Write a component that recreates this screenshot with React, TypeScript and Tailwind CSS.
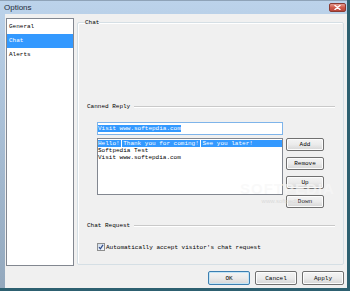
import React from 'react';

const mono = "font-['Liberation_Mono','DejaVu_Sans_Mono',monospace] text-[6px] text-black";

const WinButton: React.FC<{ label: string; primary?: boolean; className?: string }> = ({ label, primary, className }) => (
  <button
    className={`flex items-center justify-center rounded-[2px] border bg-gradient-to-b from-[#f4f4f4] via-[#ebebeb] to-[#d6d6d6] leading-[7px] ${mono} ${
      primary ? 'border-[#3c7fb1] shadow-[inset_0_0_0_1px_#c4e5f6]' : 'border-[#707070] shadow-[inset_0_0_0_1px_#fcfcfc]'
    } ${className ?? ''}`}
  >
    {label}
  </button>
);

const SectionHeader: React.FC<{ title: string }> = ({ title }) => (
  <div className="flex h-[7px] items-center">
    <span className={`${mono} leading-[7px]`}>{title}</span>
    <div className="ml-[4px] h-[2px] flex-1 border-t border-b border-t-[#c9c9c9] border-b-white" />
  </div>
);

const Sep = () => (
  <span className="flex h-full w-[3.6px] justify-center">
    <span className="h-full w-px bg-white" />
  </span>
);

const App: React.FC = () => {
  const sections = ['General', 'Chat', 'Alerts'];

  return (
    <div className="relative flex h-[291px] w-[350px] flex-col overflow-hidden border-r-[3px] border-b-[3px] border-[#2d6070] bg-gradient-to-b from-[#bcd3eb] to-[#93a8bd]">
      {/* title bar */}
      <div className="flex h-[14px] items-center justify-between border-t border-[#8fa3b8] pl-[4px] pr-[1px]">
        <span className="font-['Liberation_Sans',Arial,sans-serif] text-[8px] leading-[9px] text-[#1c2a3a]">Options</span>
        <div className="flex h-[9px] w-[17px] items-center justify-center rounded-[2px] border border-[#8a3a32] bg-gradient-to-b from-[#e39a8f] via-[#cf5a4b] to-[#b8463a]">
          <svg width="7" height="5" viewBox="0 0 7 5">
            <path d="M1 0.5 L6 4.5 M6 0.5 L1 4.5" stroke="#fff" strokeWidth="1.4" strokeLinecap="round" />
          </svg>
        </div>
      </div>

      {/* client area */}
      <div className="ml-[5px] flex flex-1 flex-col bg-[#f0f0f0] pt-[4px]">
        <div className="flex pl-[1px]">
          {/* section list */}
          <div className="h-[248px] w-[68px] border border-[#828790] bg-white pt-[1px]">
            {sections.map(s => (
              <div
                key={s}
                className={`h-[14px] pl-[2px] leading-[14px] ${mono} ${s === 'Chat' ? 'bg-[#3399ff] text-white' : ''}`}
              >
                {s}
              </div>
            ))}
          </div>

          {/* Chat group */}
          <div className="relative ml-[3px] mt-[4px] h-[243px] w-[267px] rounded-[2px] border border-[#d5dfe5] pl-[9px] pr-[8px] pt-[80px] shadow-[inset_1px_1px_0_#ffffff]">
            <span className={`absolute -top-[4px] left-[7px] bg-[#f0f0f0] leading-[7px] ${mono}`}>Chat</span>

            <SectionHeader title="Canned Reply" />

            <div className="ml-[10px] mt-[12px] flex h-[13px] w-[186px] items-center border border-[#7eb4ea] bg-white">
              <span className={`bg-[#3399ff] px-0 leading-[7px] text-white ${mono} !text-white`}>Visit www.softepdia.com</span>
            </div>

            <div className="ml-[10px] mt-[3px] flex items-start">
              <div className="h-[57px] w-[186px] border border-[#828790] bg-white pt-px">
                <div className={`flex h-[7px] items-center bg-[#3399ff] leading-[7px] ${mono} !text-white`}>
                  <span>Hello!</span>
                  <Sep />
                  <span>Thank you for coming!</span>
                  <Sep />
                  <span>See you later!</span>
                </div>
                <div className={`h-[7px] leading-[7px] ${mono}`}>Softpedia Test</div>
                <div className={`h-[7px] leading-[7px] ${mono}`}>Visit www.softepdia.com</div>
              </div>
              <div className="ml-[3px] flex flex-col gap-[6px]">
                <WinButton label="Add" className="h-[13px] w-[38px]" />
                <WinButton label="Remove" className="h-[13px] w-[38px]" />
                <WinButton label="Up" className="h-[13px] w-[38px]" />
                <WinButton label="Down" className="h-[13px] w-[38px]" />
              </div>
            </div>

            <div className="mt-[14px]">
              <SectionHeader title="Chat Request" />
            </div>

            <div className="ml-[10px] mt-[14px] flex h-[8px] items-center">
              <div className="flex h-[8px] w-[8px] items-center justify-center border border-[#8e8f8f] bg-gradient-to-br from-[#cfdcec] to-[#f4f7fb]">
                <svg width="6" height="6" viewBox="0 0 6 6">
                  <path d="M1 3.2 L2.4 4.8 L5 0.8" stroke="#2f4a8a" strokeWidth="1.2" fill="none" />
                </svg>
              </div>
              <span className={`ml-px leading-[7px] ${mono}`}>Automatically accept visitor's chat request</span>
            </div>
          </div>
        </div>

        {/* dialog buttons */}
        <div className="mt-[5px] flex justify-end gap-[5px] pr-[3px]">
          <WinButton label="OK" primary className="h-[14px] w-[42px]" />
          <WinButton label="Cancel" className="h-[14px] w-[42px]" />
          <WinButton label="Apply" className="h-[14px] w-[42px]" />
        </div>
      </div>

      {/* watermark */}
      <div className="pointer-events-none absolute left-[240px] top-[181px] flex flex-col items-center">
        <span className="font-['Liberation_Sans',Arial,sans-serif] text-[15px] font-bold leading-[16px] tracking-[1px] text-[#f7f7f7]/70">SOFTPEDIA</span>
        <span className="font-['Liberation_Sans',Arial,sans-serif] text-[6px] leading-[8px] text-[#cfcfcf]/70">www.softpedia.com</span>
      </div>
    </div>
  );
};

export default App;
